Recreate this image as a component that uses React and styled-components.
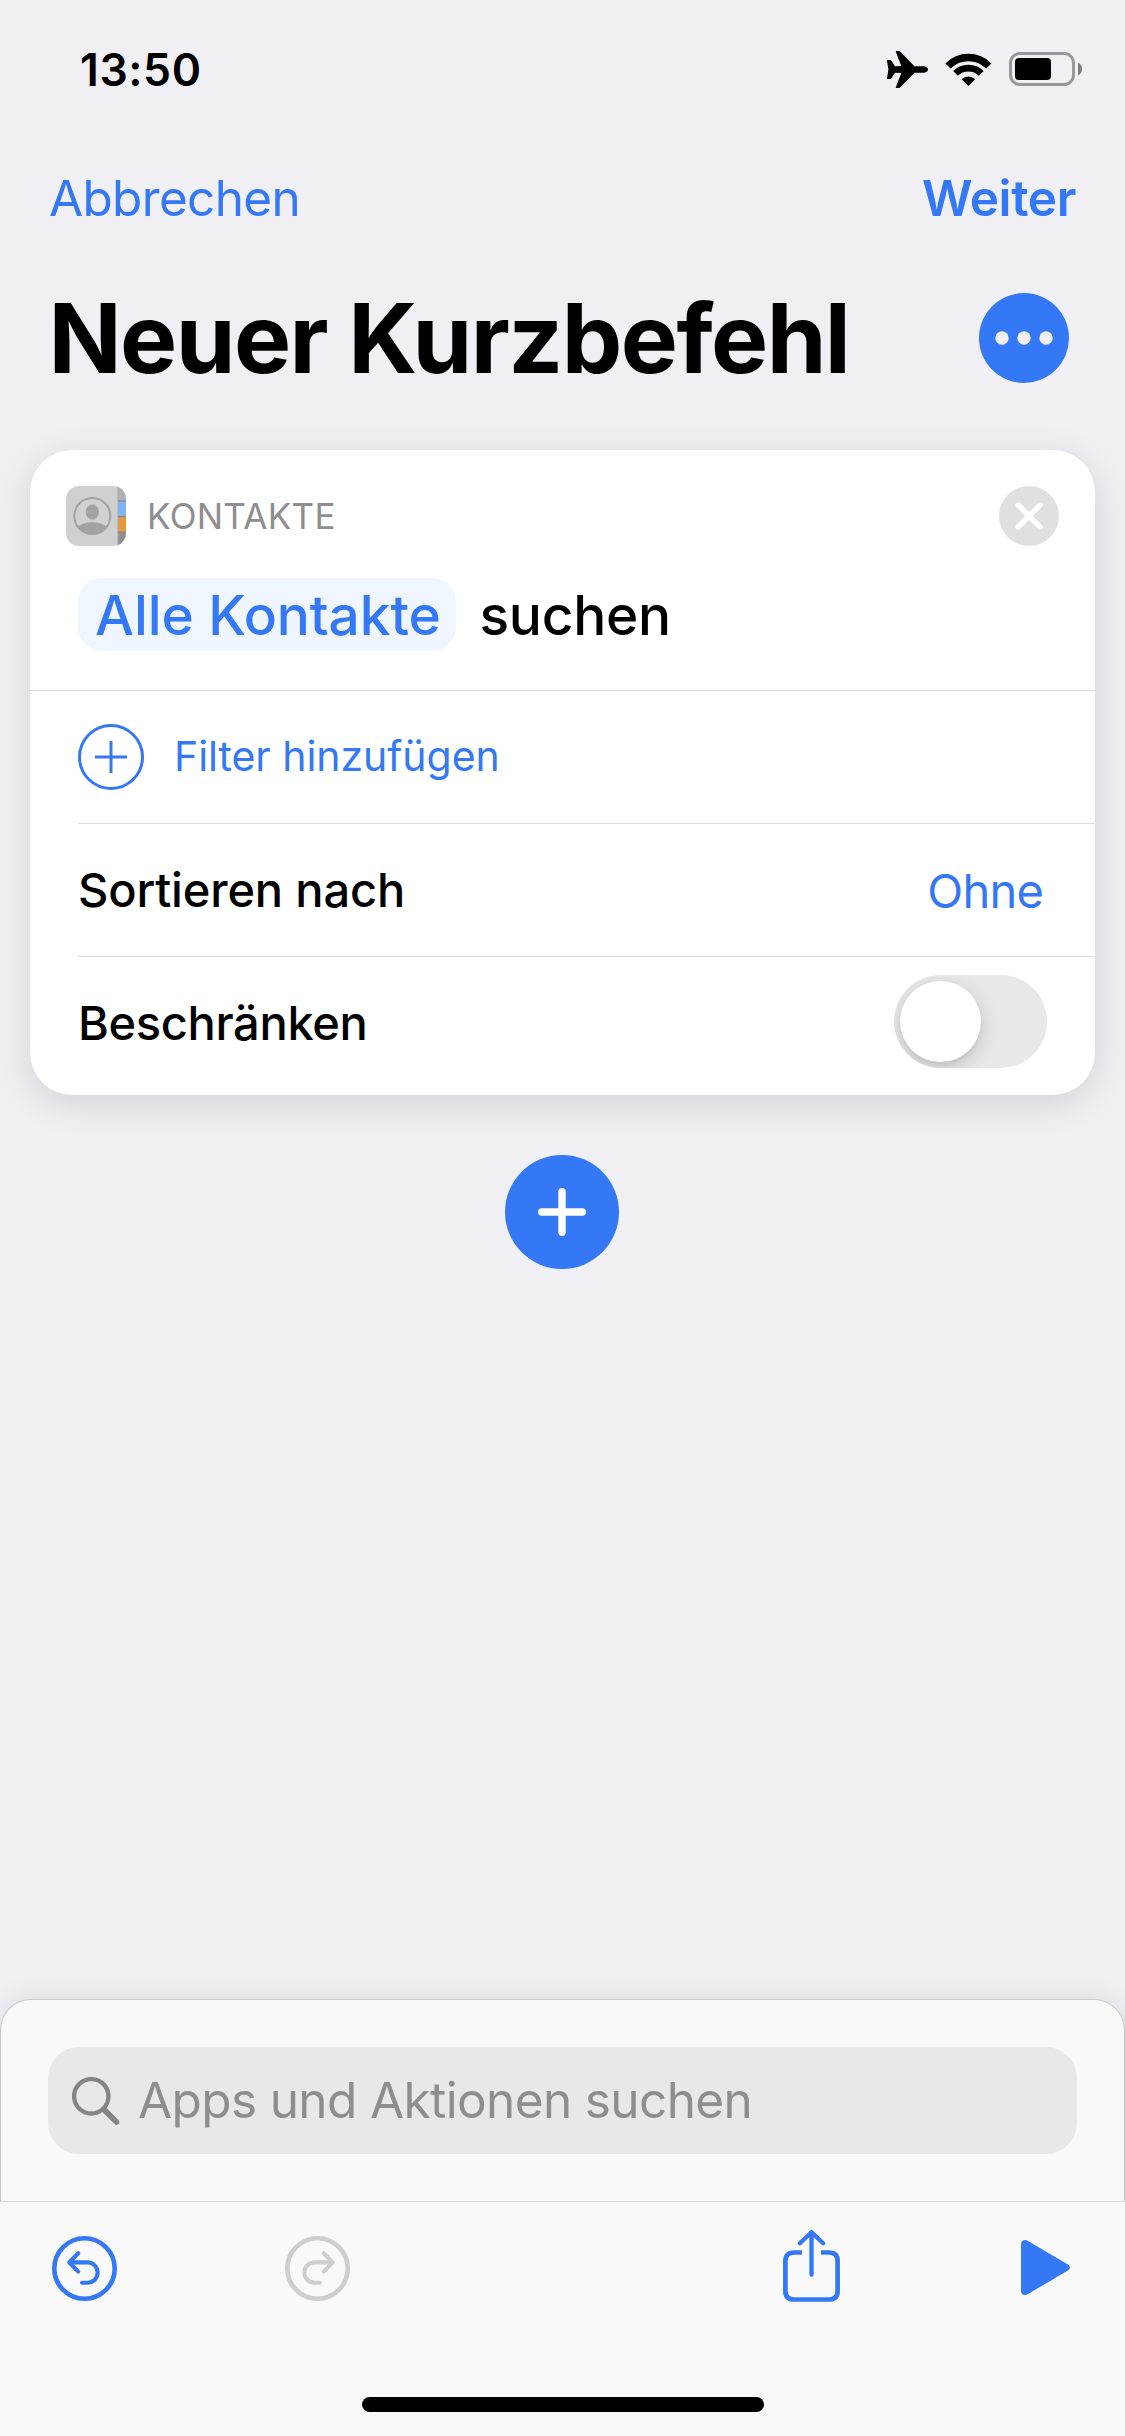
import React from "react";
import styled, { createGlobalStyle } from "styled-components";

const blue = "#3478f6";

const GlobalStyle = createGlobalStyle`
  * {
    box-sizing: border-box;
  }

  body {
    margin: 0;
    background: #efeff4;
    font-family: Inter, "Liberation Sans", sans-serif;
    color: #000;
  }

  svg {
    display: block;
    flex: none;
  }
`;

const Screen = styled.div`
  display: flex;
  flex-direction: column;
  width: 1125px;
  height: 2436px;
  overflow: hidden;
`;

const StatusBar = styled.div`
  display: flex;
  align-items: center;
  justify-content: space-between;
  height: 138px;
  padding: 0 43px 0 80px;
`;

const Time = styled.span`
  padding-top: 1px;
  font-size: 44.5px;
  font-weight: 600;
  letter-spacing: 0.6px;
`;

const StatusIcons = styled.div`
  display: flex;
  align-items: center;
  gap: 17px;
`;

const NavBar = styled.div`
  display: flex;
  align-items: center;
  justify-content: space-between;
  height: 120px;
  padding: 0 49px;
`;

const NavButton = styled.span`
  font-size: 49.5px;
  font-weight: ${props => (props.$strong ? 600 : 400)};
  letter-spacing: ${props => (props.$strong ? "-0.36px" : "-0.67px")};
  color: ${blue};
`;

const TitleRow = styled.div`
  display: flex;
  align-items: center;
  justify-content: space-between;
  height: 160px;
  padding: 0 56px 0 48.5px;
`;

const Title = styled.h1`
  margin: 0;
  font-size: 96px;
  line-height: 120px;
  font-weight: 700;
  letter-spacing: -1.55px;
  white-space: nowrap;
`;

const RoundButton = styled.div`
  display: flex;
  align-items: center;
  justify-content: center;
  flex: none;
  width: ${props => props.$size}px;
  height: ${props => props.$size}px;
  border-radius: 50%;
  background: ${props => props.$color || blue};
`;

const Card = styled.section`
  margin: 32px 30px 0;
  height: 645px;
  border-radius: 42px;
  background: #fff;
  box-shadow: 0 8px 36px rgba(0, 0, 0, 0.12);
`;

const CardHead = styled.div`
  height: 241px;
  padding: 36px 36px 0;
  border-bottom: 1px solid #dcdcde;
`;

const AppRow = styled.div`
  display: flex;
  align-items: center;
  height: 60px;
`;

const AppName = styled.span`
  flex: 1;
  margin-left: 21px;
  font-size: 35px;
  letter-spacing: 0.3px;
  color: #8e8e8f;
`;

const ActionRow = styled.div`
  display: flex;
  align-items: center;
  margin: 31.5px 0 0 12px;
  height: 73px;
  font-size: 55px;
  font-weight: 500;
  letter-spacing: -0.27px;
`;

const Token = styled.span`
  display: flex;
  align-items: center;
  width: 378px;
  height: 73px;
  margin-right: 23.5px;
  padding: 1px 0 0 17px;
  border-radius: 24px;
  background: #eff6ff;
  color: ${blue};
  letter-spacing: -0.11px;
  white-space: nowrap;
`;

const Verb = styled.span`
  padding-top: 1px;
`;

const Row = styled.div`
  display: flex;
  align-items: center;
  justify-content: space-between;
  height: ${props => props.$height || 133}px;
  margin-left: 48px;
  padding: ${props => props.$pad || "0 52px 0 0"};
  border-bottom: ${props => (props.$last ? "none" : "1px solid #dcdcde")};
  font-size: 47px;
  font-weight: 500;
`;

const RowLabel = styled.span`
  padding-bottom: ${props => props.$lift || 0}px;
  letter-spacing: ${props => props.$spacing}px;
`;

const RowValue = styled.span`
  font-size: 47px;
  font-weight: 400;
  letter-spacing: -0.8px;
  color: ${blue};
`;

const AddFilter = styled.div`
  display: flex;
  align-items: center;
  gap: 30px;
  font-size: 41px;
  font-weight: 400;
  letter-spacing: -0.05px;
  color: ${blue};
`;

const FilterLabel = styled.span`
  padding-bottom: 2px;
`;

const Toggle = styled.div`
  width: 153px;
  height: 93px;
  margin-bottom: 1px;
  padding: 6px;
  border-radius: 47px;
  background: #e8e8ea;
  overflow: hidden;
`;

const Knob = styled.div`
  width: 81px;
  height: 81px;
  border-radius: 50%;
  background: #fff;
  box-shadow: 0 6px 20px rgba(0, 0, 0, 0.16), 0 3px 4px rgba(0, 0, 0, 0.06);
`;

const AddAction = styled.div`
  display: flex;
  justify-content: center;
  margin-top: 60px;
  padding-right: 1px;
`;

const Sheet = styled.div`
  height: 202px;
  margin-top: auto;
  padding: 47px 47px 0;
  border: 1px solid #c9c9cb;
  border-bottom: none;
  border-radius: 31px 31px 0 0;
  background: #f9f9f9;
  box-shadow: 0 0 28px rgba(0, 0, 0, 0.09);
`;

const SearchField = styled.div`
  display: flex;
  align-items: center;
  gap: 18px;
  height: 107px;
  padding: 0 24px;
  border-radius: 31px;
  background: #e8e8ea;
`;

const Placeholder = styled.span`
  padding-bottom: 2px;
  font-size: 49.5px;
  letter-spacing: -0.62px;
  color: #8e8e90;
`;

const BottomBar = styled.div`
  height: 235px;
  border-top: 1px solid #d8d8da;
  background: #f9f9f9;
`;

const Tools = styled.div`
  display: flex;
  align-items: center;
  justify-content: space-between;
  height: 133px;
  padding: 0 55px 0 52px;
`;

const ToolGroup = styled.div`
  display: flex;
  align-items: center;
  gap: ${props => props.$gap}px;
`;

const HomeIndicator = styled.div`
  width: 402px;
  height: 15px;
  margin: 62px auto 0;
  border-radius: 8px;
  background: #000;
`;

const PlaneIcon = () => (
  <svg width="41" height="37" viewBox="0 0 41 37">
    <path d="M0 9.8Q0 9 .8 9h2.500q.7 0 1.100.7L8 15.200l6.300-.3L8.900 1Q8.600 0 9.400 0H11.500q1.200 0 2 .9l14 14.400h9.500q4 .8 4 3.200t-4 3.200h-9.500L13.500 36.100q-.8.9-2 .9H9.400q-.8 0-.5-1l5.400-13.900-6.300-.3-3.600 5.500q-.4.700-1.100.7H.8q-.8 0-.8-.8l1.400-8.700z" />
  </svg>
);

const WifiIcon = () => (
  <svg width="47" height="35" viewBox="0 0 47 35" fill="none" stroke="#000">
    <path d="M3 14A28.7 28.7 0 0 1 43.8 14" strokeWidth="7.4" />
    <path d="M10.5 21.4A18.3 18.3 0 0 1 36.3 21.4" strokeWidth="6.6" />
    <path
      d="M23.4 33L17.7 27.3Q23.4 23.1 29.1 27.3Z"
      fill="#000"
      strokeWidth="1.6"
      strokeLinejoin="round"
    />
  </svg>
);

const BatteryIcon = () => (
  <svg width="73" height="34" viewBox="0 0 73 34">
    <rect x="1.5" y="1.5" width="63" height="31" rx="9.5" fill="none" stroke="#98989b" strokeWidth="3" />
    <rect x="6" y="6" width="36" height="22" rx="4" />
    <path d="M69 10.8Q73 12.6 73 17T69 23.2Z" fill="#7c7c7f" />
  </svg>
);

const DotsIcon = () => (
  <svg width="60" height="16" viewBox="0 0 60 16" fill="#efeff4">
    <circle cx="8" cy="8" r="6.7" />
    <circle cx="30" cy="8" r="6.7" />
    <circle cx="52" cy="8" r="6.7" />
  </svg>
);

const ContactsIcon = () => (
  <svg width="60" height="60" viewBox="0 0 60 60">
    <defs>
      <clipPath id="tile">
        <rect width="60" height="60" rx="13" />
      </clipPath>
      <clipPath id="avatar">
        <circle cx="26.3" cy="30" r="18" />
      </clipPath>
    </defs>
    <g clipPath="url(#tile)">
      <rect width="60" height="60" fill="#d0d0d0" />
      <rect x="52" width="8" height="15" fill="#b0b0b0" />
      <rect x="52" y="15" width="8" height="15" fill="#80b1fb" />
      <rect x="52" y="30" width="8" height="16" fill="#e5973a" />
      <rect x="52" y="46" width="8" height="14" fill="#8f8f8f" />
      <path d="M52 15h8M52 30.5h8M52 46h8" stroke="#85858a" strokeWidth="1" />
      <path d="M52 0v60" stroke="#a9a9ab" strokeWidth="1" />
    </g>
    <g clipPath="url(#avatar)" fill="#a2a2a2">
      <ellipse cx="26.3" cy="26" rx="6.6" ry="7.4" />
      <ellipse cx="26.3" cy="47" rx="17" ry="10.8" />
    </g>
    <circle cx="26.3" cy="30" r="18" fill="none" stroke="#a2a2a2" strokeWidth="2" />
  </svg>
);

const CrossIcon = () => (
  <svg width="30" height="30" viewBox="0 0 30 30" stroke="#fff" strokeWidth="5.4" strokeLinecap="round">
    <path d="M4 4L26 26M26 4L4 26" />
  </svg>
);

const CirclePlusIcon = () => (
  <svg width="66" height="66" viewBox="0 0 66 66" fill="none" stroke={blue} strokeWidth="3">
    <circle cx="33" cy="33" r="31.5" />
    <path d="M17 33h32M33 17v32" />
  </svg>
);

const PlusIcon = () => (
  <svg width="48" height="48" viewBox="0 0 48 48" stroke="#fff" strokeWidth="7.4" strokeLinecap="round">
    <path d="M3.7 24h40.6M24 3.7v40.6" />
  </svg>
);

const SearchIcon = () => (
  <svg width="48" height="48" viewBox="0 0 48 48" fill="none" stroke="#858587" strokeLinecap="round">
    <circle cx="19.3" cy="19.3" r="17.2" strokeWidth="4.3" />
    <path d="M32 32.5L44.5 45" strokeWidth="5.6" />
  </svg>
);

const UndoIcon = ({ color, flip }) => (
  <svg width="65" height="65" viewBox="0 0 65 65" fill="none" stroke={color}>
    <circle cx="32.5" cy="32.5" r="30.2" strokeWidth="4.6" />
    <path
      d="M26.2 17.2L17.2 26.4L26.2 35.6M17.2 26.4H35.5A10.15 10.15 0 0 1 35.5 46.7H30"
      strokeWidth="4.1"
      strokeLinecap="round"
      strokeLinejoin="round"
      transform={flip ? "translate(65 0) scale(-1 1)" : undefined}
    />
  </svg>
);

const ShareIcon = () => (
  <svg width="57" height="77" viewBox="0 0 57 77" fill="none" stroke={blue}>
    <path
      d="M28.5 2.200V44.7M16.9 13.3L28.5 2.200L40.1 13.3"
      strokeWidth="4.300"
      strokeLinecap="round"
      strokeLinejoin="round"
    />
    <path
      d="M19 22.5H11Q2.4 22.5 2.4 31V61Q2.4 69.5 11 69.5H46Q54.6 69.5 54.6 61V31Q54.6 22.5 46 22.5H38"
      strokeWidth="4.7"
    />
  </svg>
);

const PlayIcon = () => (
  <svg width="49" height="57" viewBox="0 0 49 57" fill={blue}>
    <path d="M0 4.5Q0 0 4.2 0Q5.5 0 7 .9L46.5 24.3Q49 25.8 49 27.5T46.5 30.7L7 54.1Q5.5 55 4.2 55Q0 55 0 50.5Z" />
  </svg>
);

export default function App() {
  return (
    <Screen>
      <GlobalStyle />
      <StatusBar>
        <Time>13:50</Time>
        <StatusIcons>
          <PlaneIcon />
          <WifiIcon />
          <BatteryIcon />
        </StatusIcons>
      </StatusBar>
      <NavBar>
        <NavButton>Abbrechen</NavButton>
        <NavButton $strong>Weiter</NavButton>
      </NavBar>
      <TitleRow>
        <Title>Neuer Kurzbefehl</Title>
        <RoundButton $size={90}>
          <DotsIcon />
        </RoundButton>
      </TitleRow>

      <Card>
        <CardHead>
          <AppRow>
            <ContactsIcon />
            <AppName>KONTAKTE</AppName>
            <RoundButton $size={60} $color="#e0e0e1">
              <CrossIcon />
            </RoundButton>
          </AppRow>
          <ActionRow>
            <Token>Alle Kontakte</Token>
            <Verb>suchen</Verb>
          </ActionRow>
        </CardHead>
        <Row>
          <AddFilter>
            <CirclePlusIcon />
            <FilterLabel>Filter hinzufügen</FilterLabel>
          </AddFilter>
        </Row>
        <Row>
          <RowLabel $spacing={-0.15} $lift={2}>Sortieren nach</RowLabel>
          <RowValue>Ohne</RowValue>
        </Row>
        <Row $last $height={138} $pad="0 48px 8px 0">
          <RowLabel $spacing={-0.34}>Beschränken</RowLabel>
          <Toggle>
            <Knob />
          </Toggle>
        </Row>
      </Card>

      <AddAction>
        <RoundButton $size={114}>
          <PlusIcon />
        </RoundButton>
      </AddAction>

      <Sheet>
        <SearchField>
          <SearchIcon />
          <Placeholder>Apps und Aktionen suchen</Placeholder>
        </SearchField>
      </Sheet>
      <BottomBar>
        <Tools>
          <ToolGroup $gap={168}>
            <UndoIcon color={blue} />
            <UndoIcon color="#cececf" flip />
          </ToolGroup>
          <ToolGroup $gap={181}>
            <ShareIcon />
            <PlayIcon />
          </ToolGroup>
        </Tools>
        <HomeIndicator />
      </BottomBar>
    </Screen>
  );
}
